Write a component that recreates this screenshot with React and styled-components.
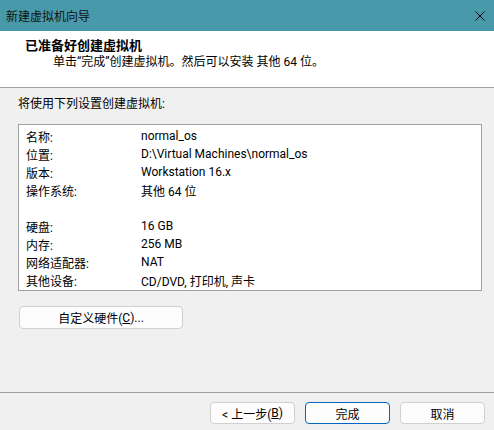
import React from "react";
import styled, { createGlobalStyle } from "styled-components";

const GlobalStyle = createGlobalStyle`
  html, body {
    margin: 0;
    padding: 0;
    background: #f0f0f0;
  }
  body {
    font-family: Roboto, "Noto Sans CJK SC", sans-serif;
    font-size: 12px;
    color: #000;
  }
`;

const Window = styled.div`
  width: 494px;
  height: 430px;
  display: flex;
  flex-direction: column;
  background: #f0f0f0;
  overflow: hidden;
`;

const TitleBar = styled.div`
  height: 31px;
  flex: none;
  display: flex;
  align-items: center;
  justify-content: space-between;
  background: #489aab;
  padding: 0 9px 0 6px;
  box-sizing: border-box;
  font-size: 12px;
  color: #111;
`;

const CloseIcon = styled.svg`
  width: 10px;
  height: 10px;
  display: block;
`;

const Header = styled.div`
  height: 57px;
  flex: none;
  box-sizing: border-box;
  background: #fff;
  border-bottom: 1px solid #a0a0a0;
  padding: 7px 0 0 25px;
`;

const Heading = styled.div`
  font-size: 13px;
  font-weight: bold;
  line-height: 16px;
`;

const SubText = styled.div`
  line-height: 16px;
  padding-left: 28px;
`;

const Body = styled.div`
  flex: 1;
  display: flex;
  flex-direction: column;
  padding: 8px 12px 0 18px;
`;

const Intro = styled.div`
  line-height: 16px;
  margin-bottom: 12px;
`;

const SummaryBox = styled.div`
  width: 464px;
  box-sizing: border-box;
  background: #fff;
  border: 1px solid #a0a0a0;
  padding: 2px 0 1px 7px;
`;

const Row = styled.div`
  display: flex;
  height: 18px;
  align-items: center;
`;

const Label = styled.div`
  width: 115px;
  flex: none;
`;

const Value = styled.div`
  white-space: nowrap;
`;

const Button = styled.button`
  font: inherit;
  font-size: 12px;
  color: #000;
  box-sizing: border-box;
  width: ${(p) => p.$width || 85}px;
  height: ${(p) => p.$height || 22}px;
  padding: 0;
  border-radius: 4px;
  background: #fdfdfd;
  border: 1px solid ${(p) => (p.$primary ? "#0067c0" : "#d0d0d0")};
  display: flex;
  align-items: center;
  justify-content: center;
`;

const CustomRow = styled.div`
  margin-top: 15px;
  padding-left: 1px;
`;

const Footer = styled.div`
  height: 38px;
  flex: none;
  box-sizing: border-box;
  border-top: 1px solid #a0a0a0;
  padding: 9px 9px 0 0;
  display: flex;
  justify-content: flex-end;
  gap: 10px;
`;

const rows = [
  ["名称:", "normal_os"],
  ["位置:", "D:\\Virtual Machines\\normal_os"],
  ["版本:", "Workstation 16.x"],
  ["操作系统:", "其他 64 位"],
  ["", ""],
  ["硬盘:", "16 GB"],
  ["内存:", "256 MB"],
  ["网络适配器:", "NAT"],
  ["其他设备:", "CD/DVD, 打印机, 声卡"],
];

export default function App() {
  return (
    <>
      <GlobalStyle />
      <Window>
        <TitleBar>
          <span>新建虚拟机向导</span>
          <CloseIcon viewBox="0 0 10 10">
            <path d="M0.5 0.5 L9.5 9.5 M9.5 0.5 L0.5 9.5" stroke="#000" strokeWidth="1" />
          </CloseIcon>
        </TitleBar>
        <Header>
          <Heading>已准备好创建虚拟机</Heading>
          <SubText>单击“完成”创建虚拟机。然后可以安装 其他 64 位。</SubText>
        </Header>
        <Body>
          <Intro>将使用下列设置创建虚拟机:</Intro>
          <SummaryBox>
            {rows.map(([label, value], i) => (
              <Row key={i}>
                <Label>{label}</Label>
                <Value>{value}</Value>
              </Row>
            ))}
          </SummaryBox>
          <CustomRow>
            <Button $width={164} $height={23}>
              自定义硬件(<u>C</u>)...
            </Button>
          </CustomRow>
        </Body>
        <Footer>
          <Button>&lt; 上一步(<u>B</u>)</Button>
          <Button $primary>完成</Button>
          <Button>取消</Button>
        </Footer>
      </Window>
    </>
  );
}
